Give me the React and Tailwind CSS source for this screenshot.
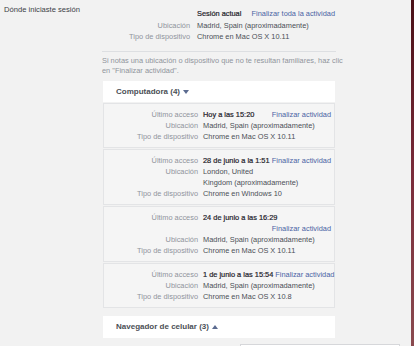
import React from 'react';

const LINK = 'text-[#4a64a4]';
const STRONG = 'text-[#1d2129] [-webkit-text-stroke:0.2px_#1d2129]';

const SessionRow = ({ rows, last }) => (
    <div className={'border border-[#e3e4e6] bg-[#f5f5f5] py-[5px] ' + (last ? '' : 'mb-[1px]')}>
        {rows.map((r, i) => (
            <div key={i} className="flex">
                <div className="w-[94px] shrink-0 text-right text-[#90949c]">{r.label}</div>
                <div className={'ml-[5px] flex-1 pr-[3px] ' + (r.bold ? STRONG : 'text-[#4b4f56]')}>{r.value}</div>
            </div>
        ))}
    </div>
)

const Arrow = ({ up }) => (
    <svg width="6" height="4" viewBox="0 0 6 4" className="ml-[3px] mt-[1px]">
        {up
            ? <path d="M0 4 L3 0 L6 4 Z" fill="#5b6b90" />
            : <path d="M0 0 L6 0 L3 4 Z" fill="#5b6b90" />}
    </svg>
)

const Action = () => (
    <span className={LINK + ' whitespace-nowrap [-webkit-text-stroke:0]'}>Finalizar actividad</span>
)

const Access = ({ when }) => (
    <span className="flex justify-between gap-[2px]">
        <span className="whitespace-nowrap">{when}</span>
        <Action />
    </span>
)

export default function App() {
    const sessions = [
        [
            { label: 'Último acceso', bold: true, value: <Access when="Hoy a las 15:20" /> },
            { label: 'Ubicación', value: 'Madrid, Spain (aproximadamente)' },
            { label: 'Tipo de dispositivo', value: 'Chrome en Mac OS X 10.11' },
        ],
        [
            { label: 'Último acceso', bold: true, value: <Access when="28 de junio a la 1:51" /> },
            { label: 'Ubicación', value: (<>London, United<br />Kingdom (aproximadamente)</>) },
            { label: 'Tipo de dispositivo', value: 'Chrome en Windows 10' },
        ],
        [
            { label: 'Último acceso', bold: true, value: (<><span className="block">24 de junio a las 16:29</span><span className="block text-right"><Action /></span></>) },
            { label: 'Ubicación', value: 'Madrid, Spain (aproximadamente)' },
            { label: 'Tipo de dispositivo', value: 'Chrome en Mac OS X 10.11' },
        ],
        [
            { label: 'Último acceso', bold: true, value: <Access when="1 de junio a las 15:54" /> },
            { label: 'Ubicación', value: 'Madrid, Spain (aproximadamente)' },
            { label: 'Tipo de dispositivo', value: 'Chrome en Mac OS X 10.8' },
        ],
    ];

    return (
        <div className="w-[414px] h-[346px] overflow-hidden flex bg-[#f2f2f2] font-['Liberation_Sans',Arial,sans-serif] text-[7.4px] leading-[11px]">
            <div className="flex-1 flex">
                <div className="w-[102px] shrink-0 pl-[4px] pt-[4px] text-[7.6px] text-[#3b3f46]">Dónde iniciaste sesión</div>

                <div className="w-[234px] shrink-0 flex flex-col">
                    {/* current session */}
                    <div className="pt-[8px] leading-[11.5px]">
                        <div className="flex">
                            <div className="w-[88px] shrink-0" />
                            <div className={'ml-[7px] ' + STRONG}>Sesión actual</div>
                            <div className={'ml-auto mr-[1px] ' + LINK}>Finalizar toda la actividad</div>
                        </div>
                        <div className="flex">
                            <div className="w-[88px] shrink-0 text-right text-[#90949c]">Ubicación</div>
                            <div className="ml-[7px] text-[#4b4f56]">Madrid, Spain (aproximadamente)</div>
                        </div>
                        <div className="flex">
                            <div className="w-[88px] shrink-0 text-right text-[#90949c]">Tipo de dispositivo</div>
                            <div className="ml-[7px] text-[#4b4f56]">Chrome en Mac OS X 10.11</div>
                        </div>
                    </div>

                    <div className="mt-[8px] border-t border-[#dddfe2]" />

                    <div className="pt-[4px] leading-[10px] text-[#90949c] whitespace-nowrap">
                        Si notas una ubicación o dispositivo que no te resultan familiares, haz clic<br />
                        en "Finalizar actividad".
                    </div>

                    {/* computers */}
                    <div className="mt-[5px] ml-[1px] w-[232px]">
                        <div className="h-[21px] bg-white flex items-center pl-[13px] text-[8px] font-bold text-[#4b4f56]">
                            Computadora (4)
                            <Arrow />
                        </div>
                        <div className="mt-[1px]">
                            {sessions.map((s, i) => (
                                <SessionRow key={i} rows={s} last={i === sessions.length - 1} />
                            ))}
                        </div>

                        <div className="mt-[8px] h-[22px] bg-white flex items-center pl-[13px] text-[8px] font-bold text-[#4b4f56]">
                            Navegador de celular (3)
                            <Arrow up />
                        </div>
                    </div>
                </div>

                <div className="flex-1 relative">
                    <div className="absolute left-[-96px] top-[344px] w-[160px] h-[10px] bg-white border border-[#d6d7da]" />
                </div>
            </div>

            <div className="w-[3px] shrink-0 bg-gradient-to-b from-[#4a1017] via-[#7a2b3a] to-[#8a4a4f]" />
        </div>
    )
}
